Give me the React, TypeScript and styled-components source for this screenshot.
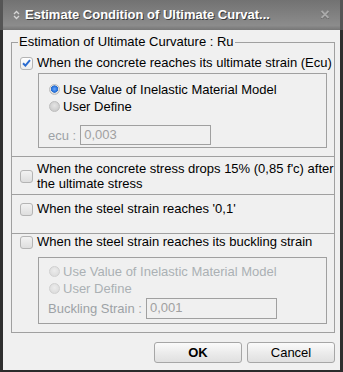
import React from "react";
import styled, { createGlobalStyle } from "styled-components";

const GlobalStyle = createGlobalStyle`
  html, body {
    margin: 0;
    padding: 0;
    background: #f0f0f0;
  }
  body {
    font-family: "Liberation Sans", Arial, sans-serif;
    font-size: 13px;
    color: #000;
  }
`;

export default function App() {
  return (
    <>
      <GlobalStyle />
      <Window>
        <TitleBar>
          <svg width="7" height="10" viewBox="0 0 7 10">
            <path d="M1 4 L3.5 1.5 L6 4" fill="none" stroke="#d6d6d6" strokeWidth="1.3" />
            <path d="M1 6 L3.5 8.5 L6 6" fill="none" stroke="#d6d6d6" strokeWidth="1.3" />
          </svg>
          <Title>Estimate Condition of Ultimate Curvat...</Title>
          <Close>
            <svg width="10" height="9" viewBox="0 0 10 9">
              <path d="M1.5 1 L8.5 8 M8.5 1 L1.5 8" stroke="#5e5e5e" strokeWidth="2.2" transform="translate(0 0.8)" />
              <path d="M1.5 1 L8.5 8 M8.5 1 L1.5 8" stroke="#a9a9a9" strokeWidth="2" />
            </svg>
          </Close>
        </TitleBar>
        <Body>
          <Group>
            <Legend>Estimation of Ultimate Curvature : Ru</Legend>
            <Section $top={6} $bottom={8} $first>
              <CheckRow>
                <Check $checked>
                  <svg width="9" height="8" viewBox="0 0 9 8">
                    <path d="M1 4.2 L3.4 6.6 L8 1.2" fill="none" stroke="#2a6bd0" strokeWidth="2" />
                  </svg>
                </Check>
                <Label>When the concrete reaches its ultimate strain (Ecu)</Label>
              </CheckRow>
              <SubBox $top={7} $bottom={2}>
                <RadioRow>
                  <Radio $selected />
                  <Label>Use Value of Inelastic Material Model</Label>
                </RadioRow>
                <RadioRow>
                  <Radio />
                  <Label>User Define</Label>
                </RadioRow>
                <FieldRow $gap={10}>
                  <FieldLabel>ecu :</FieldLabel>
                  <ValueBox $width={131}>0,003</ValueBox>
                </FieldRow>
              </SubBox>
            </Section>
            <Section $top={4} $bottom={3}>
              <CheckRow>
                <Check />
                <TwoLine>
                  When the concrete stress drops 15% (0,85 f'c) after
                  <br />
                  the ultimate stress
                </TwoLine>
              </CheckRow>
            </Section>
            <Section $top={6} $bottom={16}>
              <CheckRow>
                <Check />
                <Label>When the steel strain reaches '0,1'</Label>
              </CheckRow>
            </Section>
            <Section $top={0} $bottom={8}>
              <CheckRow>
                <Check />
                <Label>When the steel strain reaches its buckling strain</Label>
              </CheckRow>
              <SubBox $top={5} $bottom={4} $gapTop={7}>
                <RadioRow>
                  <Radio $disabled />
                  <Label $disabled>Use Value of Inelastic Material Model</Label>
                </RadioRow>
                <RadioRow>
                  <Radio $disabled />
                  <Label $disabled>User Define</Label>
                </RadioRow>
                <FieldRow $gap={1}>
                  <FieldLabel>Buckling Strain :</FieldLabel>
                  <ValueBox $width={131} $tall>0,001</ValueBox>
                </FieldRow>
              </SubBox>
            </Section>
          </Group>
          <Buttons>
            <Button $primary>OK</Button>
            <Button>Cancel</Button>
          </Buttons>
        </Body>
      </Window>
    </>
  );
}

const Window = styled.div`
  width: 343px;
  height: 372px;
  display: flex;
  flex-direction: column;
  background: #f0f0f0;
  overflow: hidden;
`;

const TitleBar = styled.div`
  height: 30px;
  box-sizing: border-box;
  display: flex;
  align-items: center;
  padding-left: 10px;
  background: linear-gradient(#727272, #8c8c8c 85%, #767676);
  border-left: 3px solid #555;
  border-right: 3px solid #555;
  svg {
    flex: none;
  }
`;

const Title = styled.div`
  margin-left: 5px;
  font-family: "Liberation Sans", Arial, sans-serif;
  font-weight: bold;
  font-size: 13px;
  color: #fff;
  text-shadow: 1px 1px 0 #3a3a3a;
  white-space: nowrap;
  margin-top: -1px;
`;

const Close = styled.div`
  margin-left: auto;
  margin-right: 10px;
  display: flex;
  margin-top: -1px;
`;

const Body = styled.div`
  flex: 1;
  display: flex;
  flex-direction: column;
  padding: 5px 5px 0 8px;
  border-left: 3px solid #2e2e2e;
  border-right: 3px solid #2e2e2e;
  border-bottom: 2px solid #2b2b2b;
`;

const Group = styled.fieldset`
  margin: 0;
  padding: 0;
  min-width: 0;
  border: 1px solid #a0a0a0;
`;

const Legend = styled.legend`
  margin-left: 6px;
  padding: 0 1px;
  line-height: 14px;
  font-size: 13px;
`;

const Section = styled.div<{ $top: number; $bottom: number; $first?: boolean }>`
  padding: ${(p) => p.$top}px 7px ${(p) => p.$bottom}px 8px;
  border-top: ${(p) => (p.$first ? "none" : "1px solid #a0a0a0")};
`;

const CheckRow = styled.div`
  display: flex;
  align-items: center;
  min-height: 16px;
`;

const Check = styled.span<{ $checked?: boolean }>`
  flex: none;
  width: 13px;
  height: 13px;
  box-sizing: border-box;
  margin-right: 4px;
  border: 1px solid #b4b4b4;
  border-radius: 3px;
  display: flex;
  align-items: center;
  justify-content: center;
  background: ${(p) =>
    p.$checked ? "linear-gradient(#ffffff, #ececec)" : "linear-gradient(#f2f2f2, #dedede)"};
`;

const Label = styled.span<{ $disabled?: boolean }>`
  white-space: nowrap;
  line-height: 16px;
  color: ${(p) => (p.$disabled ? "#abb0b4" : "#000")};
`;

const TwoLine = styled.span`
  line-height: 15px;
  white-space: nowrap;
`;

const SubBox = styled.div<{ $top: number; $bottom: number; $gapTop?: number }>`
  margin: ${(p) => p.$gapTop ?? 2}px 0 0 18px;
  padding: ${(p) => p.$top}px 0 ${(p) => p.$bottom}px 10px;
  border: 1px solid #a0a0a0;
`;

const RadioRow = styled.div`
  display: flex;
  align-items: center;
  height: 17px;
`;

const Radio = styled.span<{ $selected?: boolean; $disabled?: boolean }>`
  flex: none;
  width: 11px;
  height: 11px;
  box-sizing: border-box;
  margin-right: 3px;
  border-radius: 50%;
  border: 1px solid ${(p) => (p.$disabled ? "#d0d0d0" : "#bdbdbd")};
  background: ${(p) =>
    p.$selected
      ? "radial-gradient(circle at 50% 45%, #6aa8ff 0, #2e78e0 2.5px, #2a6cc8 3.4px, #e6e6e6 3.9px, #d2d2d2 5px)"
      : p.$disabled
      ? "radial-gradient(circle at 50% 40%, #ececec, #d8d8d8)"
      : "radial-gradient(circle at 50% 40%, #e4e4e4, #c4c4c4)"};
`;

const FieldRow = styled.div<{ $gap: number }>`
  display: flex;
  align-items: center;
  margin-top: ${(p) => p.$gap}px;
  gap: 4px;
`;

const FieldLabel = styled.span`
  color: #9da2a6;
  white-space: nowrap;
  margin-left: -1px;
`;

const ValueBox = styled.div<{ $width: number; $tall?: boolean }>`
  width: ${(p) => p.$width}px;
  height: ${(p) => (p.$tall ? 21 : 20)}px;
  box-sizing: border-box;
  border: 1px solid #a0a0a0;
  background: #f0f0f0;
  color: #a0a0a0;
  padding-left: 3px;
  line-height: 17px;
  font-size: 13px;
`;

const Buttons = styled.div`
  display: flex;
  justify-content: flex-end;
  gap: 5px;
  margin-top: 9px;
`;

const Button = styled.button<{ $primary?: boolean }>`
  width: 88px;
  height: 21px;
  padding: 0;
  border: 1px solid #a6a6a6;
  border-radius: 3px;
  background: linear-gradient(#fbfbfb, #ececec 50%, #e0e0e0);
  font-family: "Liberation Sans", Arial, sans-serif;
  font-size: 13px;
  font-weight: ${(p) => (p.$primary ? "bold" : "normal")};
  color: #000;
`;
